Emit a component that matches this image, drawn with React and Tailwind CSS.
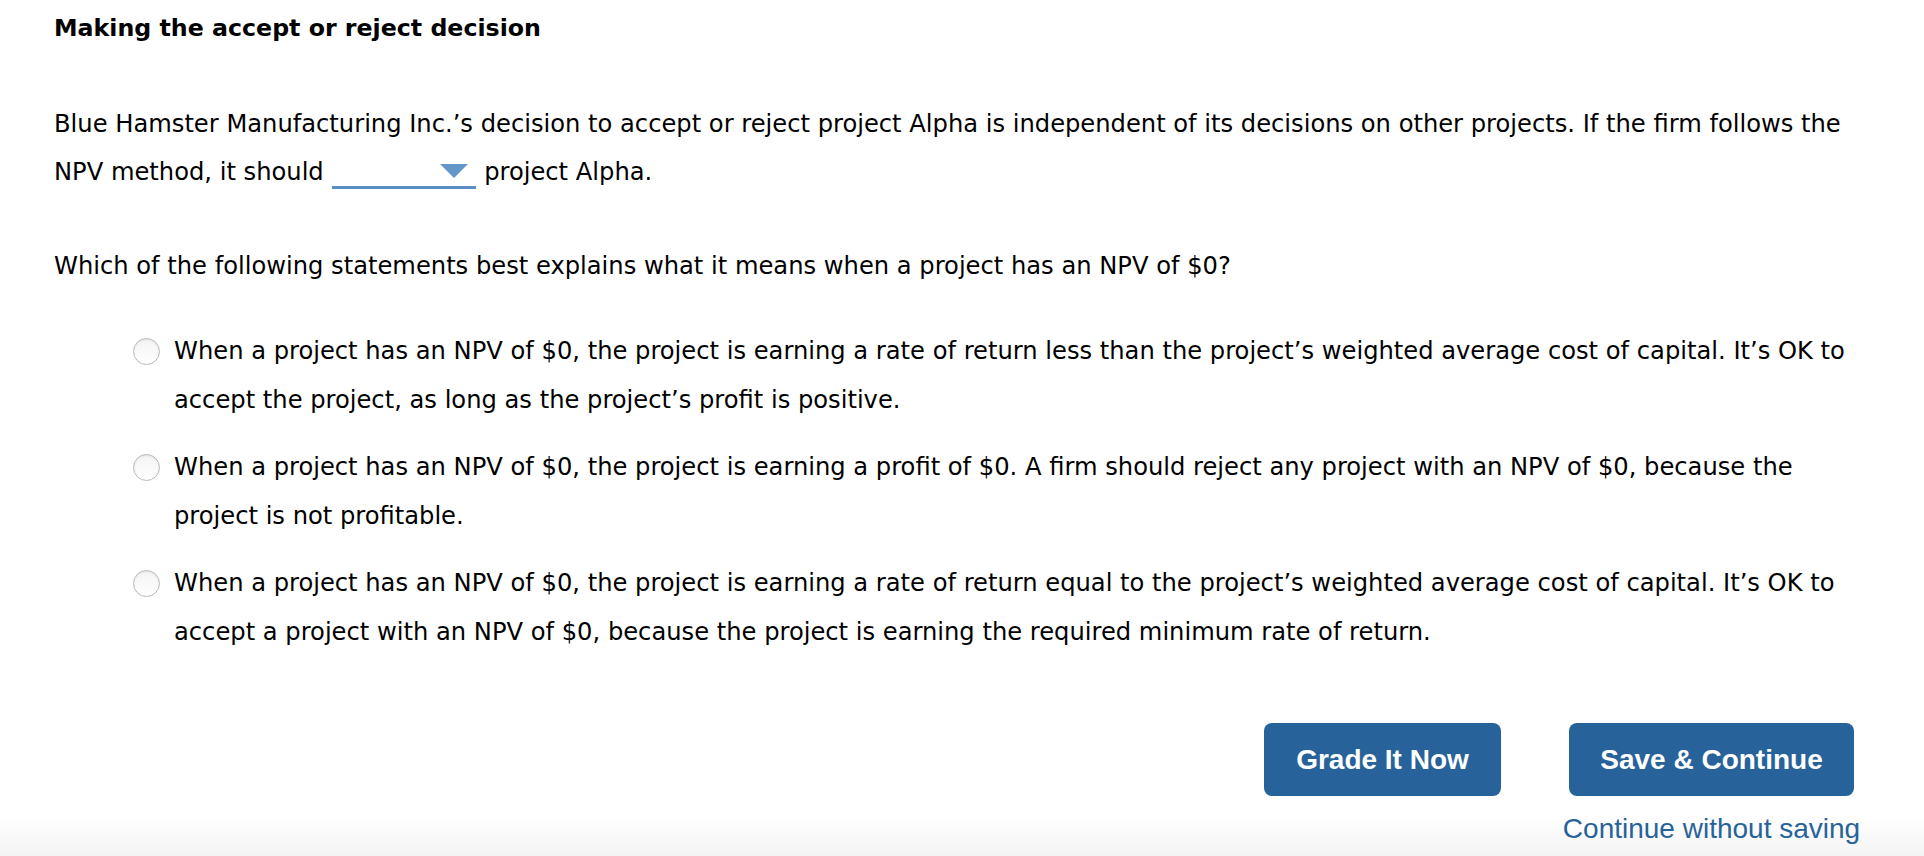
import React from "react";

function Radio() {
  return (
    <span className="mt-[11px] block h-[27px] w-[27px] shrink-0 rounded-full border border-[#b9b9b9] bg-gradient-to-b from-[#f4f4f4] to-white shadow-[inset_0_1px_2px_rgba(0,0,0,0.08)]" />
  );
}

function Option({ children }) {
  return (
    <div className="flex items-start gap-[14px]">
      <Radio />
      <p className="leading-[49px]">{children}</p>
    </div>
  );
}

export default function App() {
  return (
    <div className="relative min-h-[856px] w-full bg-white font-['DejaVu_Sans',Verdana,sans-serif] text-[24.2px] text-black">
      <div className="absolute bottom-0 left-0 h-[40px] w-full bg-gradient-to-b from-white to-[#f4f4f4]" />
      <div className="relative px-[54px] pt-[4px]">
        <h2 className="text-[23.7px] font-bold leading-[48px]">Making the accept or reject decision</h2>

        <p className="mt-[48px] leading-[48px]">
          Blue Hamster Manufacturing Inc.’s decision to accept or reject project Alpha is independent of its decisions on other projects. If the firm follows the
          <br />
          NPV method, it should{" "}
          <span className="relative ml-[1px] inline-block h-[28px] w-[144px] border-b-[3px] border-[#5b8fc4] align-[-9px]">
            <svg width="28" height="14" viewBox="0 0 28 14" className="absolute right-[8px] top-[3px]">
              <polygon points="0,0 28,0 14,14" fill="#6497c9" />
            </svg>
          </span>{" "}
          project Alpha.
        </p>

        <p className="mt-[46px] leading-[48px]">
          Which of the following statements best explains what it means when a project has an NPV of $0?
        </p>

        <div className="mt-[37px] flex flex-col gap-[18px] pl-[79px]">
          <Option>
            When a project has an NPV of $0, the project is earning a rate of return less than the project’s weighted average cost of capital. It’s OK to
            <br />
            accept the project, as long as the project’s profit is positive.
          </Option>
          <Option>
            When a project has an NPV of $0, the project is earning a profit of $0. A firm should reject any project with an NPV of $0, because the
            <br />
            project is not profitable.
          </Option>
          <Option>
            When a project has an NPV of $0, the project is earning a rate of return equal to the project’s weighted average cost of capital. It’s OK to
            <br />
            accept a project with an NPV of $0, because the project is earning the required minimum rate of return.
          </Option>
        </div>
      </div>

      <div className="relative mt-[66px] flex justify-end pr-[70px] font-['Liberation_Sans',Arial,sans-serif]">
        <div className="flex items-start gap-[68px]">
          <button className="h-[73px] w-[237px] shrink-0 rounded-[8px] bg-[#27639a] text-[28px] font-bold text-white">
            Grade It Now
          </button>
          <div className="flex w-[285px] shrink-0 flex-col items-center">
            <button className="h-[73px] w-[285px] rounded-[8px] bg-[#27639a] text-[28px] font-bold text-white">
              Save &amp; Continue
            </button>
            <a className="mt-[13px] whitespace-nowrap text-[28px] leading-[40px] text-[#27639a]">Continue without saving</a>
          </div>
        </div>
      </div>
    </div>
  );
}
